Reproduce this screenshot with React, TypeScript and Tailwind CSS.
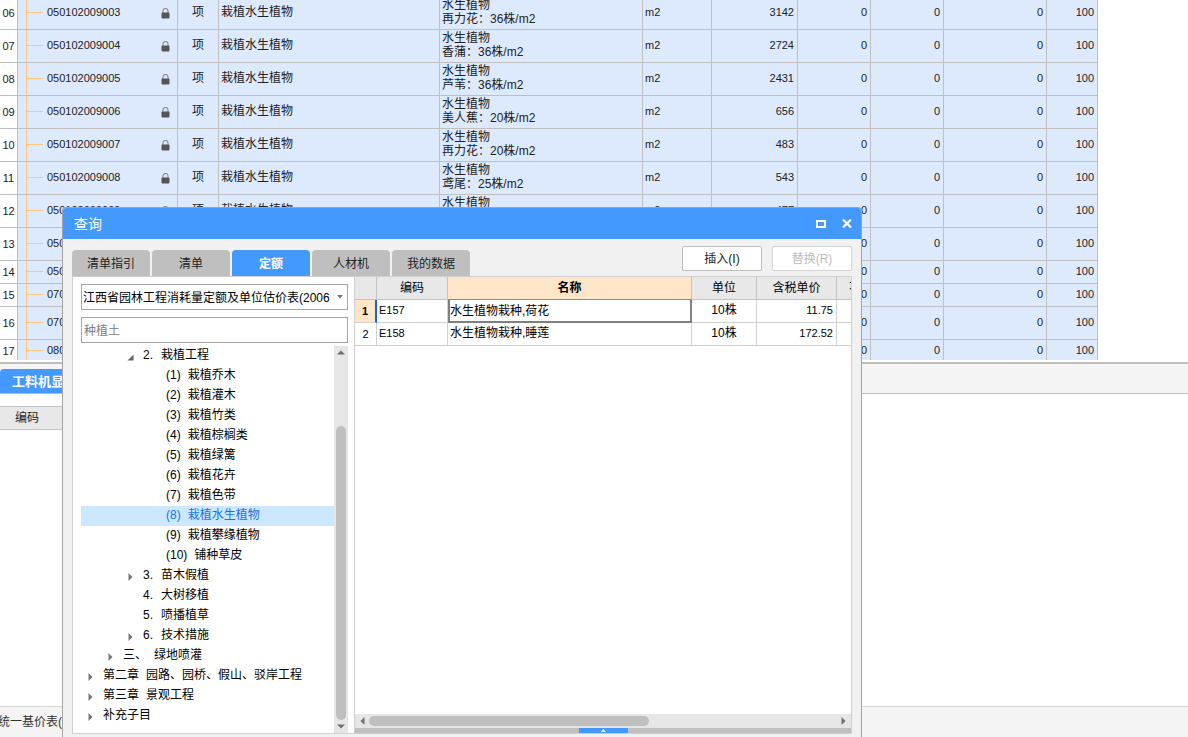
import React, { useState } from "react";
import { clsx } from "clsx";

type BillRow = {
  no: string;
  code: string;
  feature?: string;
  qty?: string;
  compact?: boolean;
};

const billRows: BillRow[] = [
  { no: "06", code: "050102009003", feature: "再力花：36株/m2", qty: "3142" },
  { no: "07", code: "050102009004", feature: "香蒲：36株/m2", qty: "2724" },
  { no: "08", code: "050102009005", feature: "芦苇：36株/m2", qty: "2431" },
  { no: "09", code: "050102009006", feature: "美人蕉：20株/m2", qty: "656" },
  { no: "10", code: "050102009007", feature: "再力花：20株/m2", qty: "483" },
  { no: "11", code: "050102009008", feature: "鸢尾：25株/m2", qty: "543" },
  { no: "12", code: "050102009009", feature: "睡莲：10株/m2", qty: "477" },
  { no: "13", code: "050102009010" },
  { no: "14", code: "050102012001", compact: true },
  { no: "15", code: "070101001001", compact: true },
  { no: "16", code: "070101002001" },
  { no: "17", code: "080101001001", compact: true },
];

type TreeNode = {
  prefix?: string;
  label: string;
  level: 0 | 1 | 2 | 3;
  state?: "open" | "closed";
};

const treeNodes: TreeNode[] = [
  { prefix: "2.", label: "栽植工程", level: 2, state: "open" },
  { prefix: "(1)", label: "栽植乔木", level: 3 },
  { prefix: "(2)", label: "栽植灌木", level: 3 },
  { prefix: "(3)", label: "栽植竹类", level: 3 },
  { prefix: "(4)", label: "栽植棕榈类", level: 3 },
  { prefix: "(5)", label: "栽植绿篱", level: 3 },
  { prefix: "(6)", label: "栽植花卉", level: 3 },
  { prefix: "(7)", label: "栽植色带", level: 3 },
  { prefix: "(8)", label: "栽植水生植物", level: 3 },
  { prefix: "(9)", label: "栽植攀缘植物", level: 3 },
  { prefix: "(10)", label: "铺种草皮", level: 3 },
  { prefix: "3.", label: "苗木假植", level: 2, state: "closed" },
  { prefix: "4.", label: "大树移植", level: 2 },
  { prefix: "5.", label: "喷播植草", level: 2 },
  { prefix: "6.", label: "技术措施", level: 2, state: "closed" },
  { prefix: "三、", label: "绿地喷灌", level: 1, state: "closed" },
  { prefix: "第二章", label: "园路、园桥、假山、驳岸工程", level: 0, state: "closed" },
  { prefix: "第三章", label: "景观工程", level: 0, state: "closed" },
  { label: "补充子目", level: 0, state: "closed" },
];

const levelPadding = ["pl-[6px]", "pl-[26px]", "pl-[46px]", "pl-[69px]"];

const tabs = ["清单指引", "清单", "定额", "人材机", "我的数据"];

const quotaRows = [
  { code: "E157", name: "水生植物栽种,荷花", unit: "10株", price: "11.75" },
  { code: "E158", name: "水生植物栽种,睡莲", unit: "10株", price: "172.52" },
];

const LockIcon = () => (
  <svg width="9" height="11" viewBox="0 0 9 11" className="shrink-0">
    <path d="M2 5V3a2.5 2.5 0 0 1 5 0v2" fill="none" stroke="#8b8f96" strokeWidth="1.2" />
    <rect x="0.5" y="4.6" width="8" height="5.8" rx="0.8" fill="#555" />
  </svg>
);

const Arrow = ({ dir, className }: { dir: "up" | "down" | "left" | "right"; className?: string }) => {
  const paths = {
    up: "M0 4.5 4 0.5l4 4z",
    down: "M0 0.5h8L4 4.5z",
    left: "M4.5 0v8L0.5 4z",
    right: "M0.5 0 4.5 4l-4 4z",
  };
  const vertical = dir === "up" || dir === "down";
  return (
    <svg
      width={vertical ? 8 : 5}
      height={vertical ? 5 : 8}
      viewBox={vertical ? "0 0 8 5" : "0 0 5 8"}
      className={className}
    >
      <path d={paths[dir]} fill="currentColor" />
    </svg>
  );
};

const BillTable = () => (
  <div className="h-[360px] shrink-0 overflow-hidden">
    <table className="-mt-[3px] w-[1098px] table-fixed border-separate border-spacing-0 text-[#222]">
      <colgroup>
        <col className="w-[18px]" />
        <col className="w-[160px]" />
        <col className="w-[41px]" />
        <col className="w-[221px]" />
        <col className="w-[203px]" />
        <col className="w-[69px]" />
        <col className="w-[86px]" />
        <col className="w-[73px]" />
        <col className="w-[73px]" />
        <col className="w-[103px]" />
        <col className="w-[51px]" />
      </colgroup>
      <tbody>
        {billRows.map((row) => (
          <tr
            key={row.no}
            className="bg-[#ddeafe] [&>*]:border-r [&>*]:border-b [&>*]:border-[#bfbfbf] [&>*]:p-0"
          >
            <th className="bg-white text-center text-[11px] font-normal">{row.no}</th>
            <td>
              <div className={clsx("flex items-stretch pl-2", row.compact ? "h-[22px]" : "h-8")}>
                {/* Branch of the bill tree */}
                <span className="w-px bg-[#ffc67d]" />
                <span className={clsx("w-4 border-b border-[#ffc67d]", row.compact ? "h-[11px]" : "h-4")} />
                <span className="ml-1 flex-1 self-center pb-0.5 text-[11px]">{row.code}</span>
                <span className="mr-[7px] self-center">
                  <LockIcon />
                </span>
              </div>
            </td>
            <td className="pb-0.5! text-center">项</td>
            <td className="pb-0.5!">
              <span className="pl-0.5">栽植水生植物</span>
            </td>
            <td className="pb-0.5!">
              {row.feature && (
                <div className="pl-0.5 leading-[14px]">
                  水生植物
                  <br />
                  {row.feature}
                </div>
              )}
            </td>
            <td className="pb-0.5!">
              <span className="pl-0.5 text-[11px]">m2</span>
            </td>
            {[row.qty, "0", "0", "0", "100"].map((value, i) => (
              <td key={i} className="pb-0.5! text-right text-[11px]">
                <span className="pr-[3px]">{value}</span>
              </td>
            ))}
          </tr>
        ))}
      </tbody>
    </table>
  </div>
);

const QuotaTree = () => {
  const [selected, setSelected] = useState("栽植水生植物");

  return (
    <div className="flex min-h-0 flex-1">
      <ul className="min-w-0 flex-1 overflow-hidden">
        {treeNodes.map((node) => (
          <li
            key={node.label}
            onClick={() => setSelected(node.label)}
            className={clsx(
              "flex h-5 items-center pb-0.5 whitespace-nowrap",
              levelPadding[node.level],
              selected === node.label ? "bg-[#cce8ff] text-[#1672e6]" : "text-black"
            )}
          >
            <span className="flex w-4 shrink-0 text-[#777]">
              {node.state === "closed" && <Arrow dir="right" className="mt-1 ml-px" />}
              {node.state === "open" && (
                <svg width="7" height="7" viewBox="0 0 7 7" className="mt-1">
                  <path d="M6.5 0.5v6h-6z" fill="#666" />
                </svg>
              )}
            </span>
            {node.prefix && (
              <span className={clsx(node.level === 2 ? "mr-1.5 w-3" : "mr-[7px]")}>{node.prefix}</span>
            )}
            {node.label}
          </li>
        ))}
      </ul>
      {/* Vertical scrollbar */}
      <div className="flex w-[14px] flex-col items-center bg-[#e6e6e6] py-1 text-[#6d6f78]">
        <Arrow dir="up" />
        <div className="mt-[71px] w-[10px] flex-1 rounded-full bg-[#bfbfbf]" />
        <Arrow dir="down" className="mt-1" />
      </div>
    </div>
  );
};

const QuotaTable = () => (
  <table className="w-full table-fixed border-separate border-spacing-0 text-black">
    <colgroup>
      <col className="w-[22px]" />
      <col className="w-[71px]" />
      <col className="w-[244px]" />
      <col className="w-[65px]" />
      <col className="w-[80px]" />
      <col />
    </colgroup>
    <thead>
      <tr className="h-[23px] bg-[#e8e8e8] [&>th]:border-r [&>th]:border-b [&>th]:border-[#c3c3c3] [&>th]:p-0 [&>th]:font-normal">
        <th />
        <th>编码</th>
        <th className="border-b-[#4499ff]! bg-[#ffe6c8] font-bold!">名称</th>
        <th>单位</th>
        <th>含税单价</th>
        <th className="overflow-hidden border-r-0!">
          <div className="ml-3 w-6">不含</div>
        </th>
      </tr>
    </thead>
    <tbody>
      {quotaRows.map((row, i) => (
        <tr
          key={row.code}
          className="h-[23px] [&>*]:border-r [&>*]:border-b [&>*]:border-[#d0d0d0] [&>*]:p-0"
        >
          <th
            className={clsx(
              "text-[11px]",
              i === 0 ? "border-r-2! border-r-[#0a63ff]! bg-[#ffe6c8] font-bold" : "font-normal"
            )}
          >
            {i + 1}
          </th>
          <td className="pb-0.5!">
            <span className="pl-0.5 text-[11px]">{row.code}</span>
          </td>
          <td className={clsx(i === 0 ? "border-r-2! border-b-2! border-l-2 border-[#7f7f7f]!" : "pb-0.5!")}>
            <span className={i === 0 ? "" : "pl-0.5"}>{row.name}</span>
          </td>
          <td className="pb-0.5! text-center">{row.unit}</td>
          <td className="pb-0.5! text-right">
            <span className="pr-[3px] text-[11px]">{row.price}</span>
          </td>
          <td className="border-r-0!" />
        </tr>
      ))}
    </tbody>
  </table>
);

const QueryDialog = () => {
  const [activeTab, setActiveTab] = useState("定额");

  return (
    <div
      role="dialog"
      aria-label="查询"
      className="absolute top-[207px] bottom-0 left-[62px] flex w-[800px] flex-col rounded-t border border-b-0 border-[#a3a3a3] bg-[#f1f1f1]"
    >
      {/* Title bar */}
      <div className="flex h-[31px] shrink-0 items-center rounded-t-[3px] bg-[#4499ff] pr-[9px] pl-[11px] text-white">
        <h2 className="flex-1 text-sm">查询</h2>
        <button aria-label="最大化" className="mr-4">
          <svg width="10" height="8" viewBox="0 0 10 8">
            <rect x="1" y="1" width="8" height="6" fill="none" stroke="currentColor" strokeWidth="2" />
          </svg>
        </button>
        <button aria-label="关闭">
          <svg width="10" height="9" viewBox="0 0 10 9">
            <path d="M1 0.5l8 8M9 0.5l-8 8" stroke="currentColor" strokeWidth="2.2" />
          </svg>
        </button>
      </div>

      {/* Tabs and actions */}
      <div className="flex h-[37px] shrink-0 items-end px-[9px]">
        <div className="flex gap-0.5">
          {tabs.map((tab) => (
            <button
              key={tab}
              onClick={() => setActiveTab(tab)}
              className={clsx(
                "h-[26px] w-[78px] rounded-t-sm pt-0.5",
                tab === activeTab ? "bg-[#4499ff] font-bold text-white" : "bg-[#bfbfbf] text-[#222]"
              )}
            >
              {tab}
            </button>
          ))}
        </div>
        <div className="mb-[5px] ml-auto flex gap-2.5">
          <button className="h-[25px] w-20 rounded-xs border border-[#bdbdbd] bg-white text-[#222]">插入(I)</button>
          <button disabled className="h-[25px] w-20 rounded-xs border border-[#d4d4d4] bg-white text-[#bcbcbc]">
            替换(R)
          </button>
        </div>
      </div>

      <div className="mx-[9px] mb-[3px] flex min-h-0 flex-1 border border-[#cfcfcf] bg-white">
        {/* Search panel */}
        <div className="flex w-[282px] shrink-0 flex-col border-r border-[#cfcfcf] pr-[6px] pl-2">
          <div className="relative mt-[7px] shrink-0">
            <select
              aria-label="定额库"
              className="block h-[26px] w-full appearance-none border border-[#a5a5a5] bg-white pt-0.5 pr-4 pl-px text-black"
            >
              <option>江西省园林工程消耗量定额及单位估价表(2006</option>
            </select>
            <svg width="6" height="4" viewBox="0 0 6 4" className="pointer-events-none absolute top-[11px] right-[5px]">
              <path d="M0 0h6L3 3.5z" fill="#777" />
            </svg>
          </div>
          <input
            aria-label="查询条件"
            placeholder="种植土"
            className="mt-[7px] mb-[3px] block h-[26px] w-full shrink-0 border border-[#a5a5a5] bg-white px-0.5 pt-0.5 placeholder:text-[#808080]"
          />
          <QuotaTree />
        </div>

        {/* Result panel */}
        <div className="flex min-w-0 flex-1 flex-col">
          <div className="min-h-0 flex-1 overflow-hidden">
            <QuotaTable />
          </div>
          <div className="flex h-[14px] shrink-0 items-center bg-[#e6e6e6] px-[5px] text-[#6d6f78]">
            <Arrow dir="left" />
            <div className="ml-1 h-[10px] w-[280px] rounded-full bg-[#bfbfbf]" />
            <Arrow dir="right" className="ml-auto" />
          </div>
          <div className="flex h-[5px] shrink-0 justify-center bg-[#bfbfbf]">
            <button aria-label="展开" className="flex w-[49px] items-center justify-center bg-[#4499ff]">
              <svg width="5" height="3" viewBox="0 0 5 3">
                <path d="M0 3h5L2.5 0z" fill="#fff" />
              </svg>
            </button>
          </div>
        </div>
      </div>
    </div>
  );
};

const App: React.FC = () => {
  return (
    <div className="relative flex h-screen flex-col overflow-hidden bg-white font-['Liberation_Sans','Noto_Sans_CJK_SC',sans-serif] text-xs">
      <BillTable />

      {/* Detail tabs */}
      <div className="mt-0.5 flex h-8 shrink-0 items-end border-t-2 border-b border-[#bfbfbf] bg-[#f4f4f4]">
        <button className="h-6 w-24 rounded-tl-sm bg-[#4499ff] pt-0.5 pl-3 text-left text-[13px] font-bold text-white">
          工料机显示
        </button>
      </div>
      <div className="flex-1 pt-3">
        <div className="flex h-6 w-[400px] items-center border border-l-0 border-[#c3c3c3] bg-[#e8e8e8] pl-[15px] text-[#222]">
          编码
        </div>
      </div>

      {/* Status bar */}
      <div className="flex h-[31px] shrink-0 items-center border-t border-[#d5d5d5] bg-[#f4f4f4] whitespace-nowrap text-[#333]">
        <span className="-ml-0.5">统一基价表(</span>
      </div>

      <QueryDialog />
    </div>
  );
};

export default App;
